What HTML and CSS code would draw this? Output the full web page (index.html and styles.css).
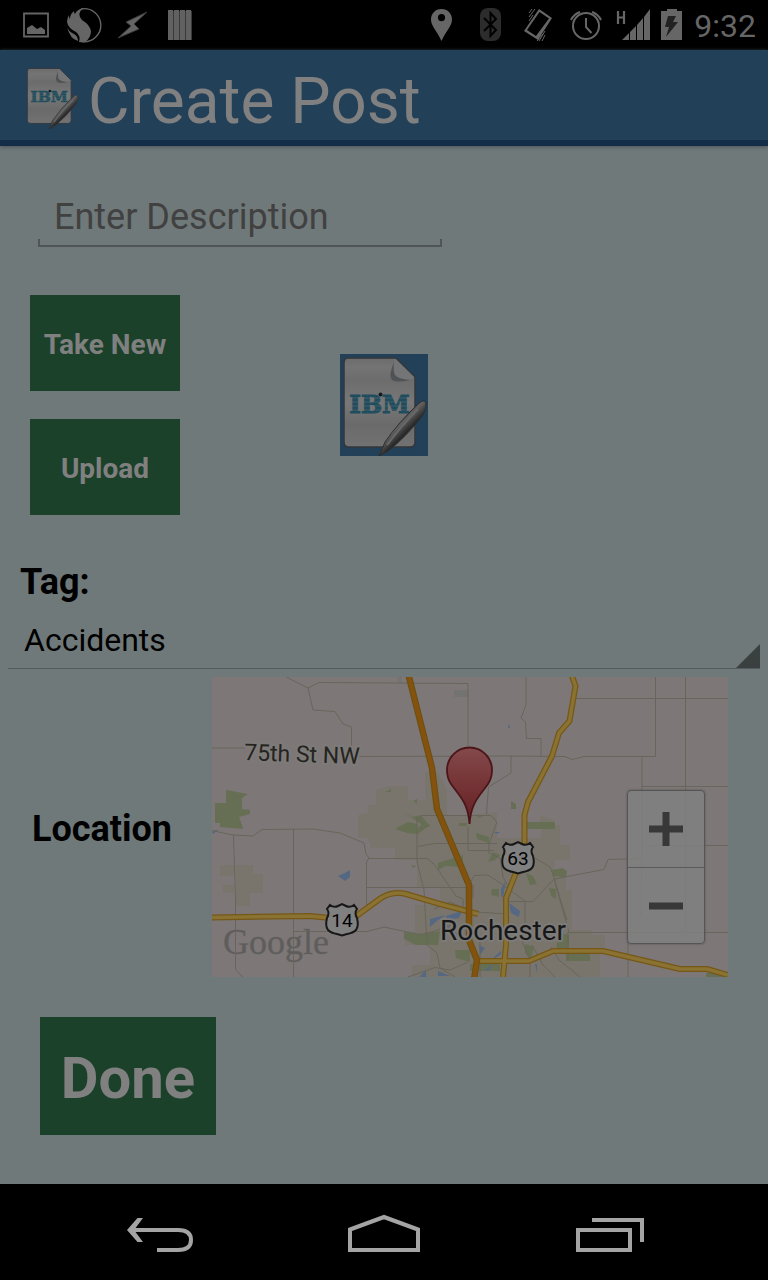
FILE: index.html
```html
<!DOCTYPE html>
<html lang="en">
<head>
<meta charset="utf-8">
<meta name="viewport" content="width=device-width, initial-scale=1">
<title>Create Post</title>
<link rel="stylesheet" href="styles.css">
</head>
<body>
<svg class="defs" aria-hidden="true">
  <defs>
    <linearGradient id="paper" x1="0" y1="0" x2="0" y2="1">
      <stop offset="0" stop-color="#6c6c6c"/><stop offset=".1" stop-color="#747474"/>
      <stop offset=".25" stop-color="#6c6c6c"/><stop offset=".5" stop-color="#787878"/>
      <stop offset=".75" stop-color="#6a6a6a"/><stop offset="1" stop-color="#727272"/>
    </linearGradient>
    <linearGradient id="pen" gradientUnits="userSpaceOnUse" x1="58" y1="66" x2="68" y2="76">
      <stop offset="0" stop-color="#3a3a3a"/><stop offset=".35" stop-color="#626262"/>
      <stop offset=".7" stop-color="#444"/><stop offset="1" stop-color="#2a2a2a"/>
    </linearGradient>
    <symbol id="doc" viewBox="0 0 88 102">
      <path d="M8 4H56L75 23V88Q75 93 70 93H9Q4 93 4 88V9Q4 4 8 4Z" fill="url(#paper)" stroke="#33373b" stroke-width="1.500"/>
      <path d="M55 5L74 23Q73 26 60 27Q51 27 52 16Z" fill="#747576"/>
      <path d="M54 8Q48 22 52 26Q57 29 70 26Q58 25 55 21Q53 17 54 8Z" fill="#505355"/>
      <text class="doc-mark" x="39.500" y="59" text-anchor="middle">IBM</text>
      <path d="M10 44H68M10 48H68M10 52H68M10 56H68" stroke="#6f7576" stroke-width="1" opacity=".45"/>
      <circle cx="40.500" cy="40.500" r="2" fill="#101c20"/>
      <path d="M39 102L45 88Q58 69 79 49Q84 45 86 49Q87 54 83 61Q66 83 48 97Z" fill="url(#pen)" stroke="#2e2e2e" stroke-width="1"/>
      <path d="M47 91Q62 71 78 55" fill="none" stroke="#686868" stroke-width="2"/>
    </symbol>
  </defs>
</svg>

<div class="status">
  <svg class="status-icon" viewBox="0 0 48 50"><path d="M12 13.500H36V36.500H12Z" fill="none" stroke="#656565" stroke-width="1.800"/><path d="M15 34V28L20 25L25 29L29 27L33 30V34Z" fill="#656565"/></svg>
  <svg class="status-icon" viewBox="0 0 48 50"><path d="M21 9A16.500 16.500 0 1 1 22 41.500" fill="none" stroke="#656565" stroke-width="1.400"/><path d="M24 8Q16 13 22 20Q30 25 31 31Q31 38 25 42Q22 42.500 19 42Q21 36 16 32Q8 28 7 22Q7 18 9 15Q9 18 10 19Q10 14 14 11Q14 14 15 14Q17 9 24 8ZM7 27Q9 32 14 34Q18 36 18 41Q10 39 7 27Z" fill="#656565"/></svg>
  <svg class="status-icon" viewBox="0 0 48 50"><path d="M39 12L18 22L23 26L10 38L31 29L26 24Z" fill="#656565" stroke="#3c3c3c" stroke-width="1"/></svg>
  <svg class="status-icon" viewBox="0 0 48 50"><path d="M12 10H17V40H12ZM18 10H23V40H18ZM24 10H29V40H24ZM30 10H35V40H30Z" fill="#616161"/><path d="M17.500 11V40M23.500 11V40M29.500 11V40M35.500 11V40" stroke="#393939"/></svg>
  <span class="spacer"></span>
  <svg class="status-icon" viewBox="0 0 48 50"><path fill-rule="evenodd" d="M23.500 9C17 9 13 14 13 19.500C13 26 19 31 23.500 41C28 31 34 26 34 19.500C34 14 30 9 23.500 9ZM23.500 14A3.600 3.600 0 1 1 23.500 21.200A3.600 3.600 0 1 1 23.500 14Z" fill="#666"/></svg>
  <svg class="status-icon" viewBox="0 0 48 50"><rect x="14" y="8" width="21" height="33" rx="8" fill="#2c2c2c"/><path d="M18 18L30 30L24.500 36V13L30 19L18 31" fill="none" stroke="#000" stroke-width="2"/></svg>
  <svg class="status-icon" viewBox="0 0 48 50"><path fill-rule="evenodd" d="M25 9L38 18L24 40L10 31ZM25.500 12L13 30L22 36L35 18.500Z" fill="#666"/><path d="M15 17L21 9M15 21L19 15M15 13L18 9M25 41L31 31M28 41L31 35M23 41L29 34" stroke="#666" stroke-width="1"/></svg>
  <svg class="status-icon" viewBox="0 0 48 50"><circle cx="24" cy="26" r="13" fill="none" stroke="#666" stroke-width="2"/><path d="M24 18V27L29.500 33M9 20Q12 14 18 12M39 20Q36 14 30 12" fill="none" stroke="#666" stroke-width="2"/></svg>
  <svg class="status-icon" viewBox="0 0 48 50"><path d="M8 11V24M14 11V24M8 17.500H14" stroke="#666" stroke-width="2.200" fill="none"/><path d="M12 40L19 33V40ZM20 32L26 26V40H20ZM27 25L33 18V40H27ZM34 17L40 9V40H34Z" fill="#666"/></svg>
  <svg class="status-icon battery" viewBox="0 0 28 50"><path d="M3 11H9V9H19V11H24V40H3Z" fill="#666"/><path d="M10 16H18L15 22H20L8 37L11 27H7Z" fill="#222"/></svg>
  <time class="clock">9:32</time>
</div>

<header class="bar">
  <svg class="bar-icon"><use href="#doc"/></svg>
  <h1 class="bar-title">Create Post</h1>
</header>

<main class="form">
  <input class="description" type="text" placeholder="Enter Description" aria-label="Description">
  <section class="photo">
    <div class="photo-actions">
      <button class="btn" type="button">Take New</button>
      <button class="btn" type="button">Upload</button>
    </div>
    <svg class="preview" role="img" aria-label="Post picture"><use href="#doc"/></svg>
  </section>
  <label class="tag-label" for="tag">Tag:</label>
  <select class="tag" id="tag"><option>Accidents</option></select>
  <section class="location">
    <h2 class="location-label">Location</h2>
    <div class="map">
      <svg class="map-canvas" viewBox="212 677 516 300" role="img" aria-label="Map of Rochester">
        <defs>
          <linearGradient id="pin" x1="0" y1="0" x2="0" y2="1"><stop offset="0" stop-color="#84494a"/><stop offset="1" stop-color="#641e22"/></linearGradient>
          <path id="shield" d="M-12 -15Q-8 -12 -4 -14L0 -16L4 -14Q8 -12 12 -15L15 -11Q12 -7 15 -2Q17 6 14 10Q11 13 5 14L0 15.500L-5 14Q-11 13 -14 10Q-17 6 -15 -2Q-12 -7 -15 -11Z"/>
        </defs>
        <rect x="212" y="677" width="516" height="300" fill="#7d7877"/>
        <g fill="#79756d">
          <path d="M358 825V815L368 813V805H376V790L390 786H408V800H425V772H438L447 790V815H470L497 812V838H541V825H560V845H570V860H555V875H566V890H572V930H592V945H600V977H412V965H430V945H405V932H415V905H440V887H417V860H395V848H370V838H358Z"/>
          <path d="M220 865H234V876H220ZM236 865H253V874H263V893H250V906H236ZM223 885H234V893H223ZM368 826H383V842H368ZM540 815L554 820V826H540ZM592 935H605V952H592Z"/>
        </g>
        <g fill="#666f54">
          <path d="M226 790L248 794L242 798V809L250 810V814L239 817L243 828H230V823H215V803H226ZM220 820H237L243 829L220 827Z"/>
          <path d="M397 828L408 822L417 824V829L424 821L430 825L418 834L407 833L395 829ZM401 811L412 817L421 815L430 827L425 827L414 819ZM385 792L391 789V792ZM413 801L417 799V804ZM438 863L463 855V867L446 866L438 870ZM404 932L417 934L440 931L438 945H416L404 939ZM526 822H555V829H526ZM511 801L516 804V809H511ZM476 833L489 837V843L477 839ZM552 870L562 868L567 871L566 877L553 876ZM526 873L533 876L537 884L530 885ZM549 888L556 889V899L551 896ZM492 889H499V897L491 895ZM558 934H569V951H590V961H566V952H556ZM525 944L534 947L531 959L525 953ZM410 865L416 866L414 868ZM455 950H470V962L456 958ZM470 964H500V971H470ZM493 852L500 855L495 860L488 862ZM459 823H467V826H459ZM706 973H728V977H706ZM477 816L484 815L480 818Z"/>
        </g>
        <g fill="#546783">
          <path d="M338 876L345 873L350 870L350 877L345 881ZM212 832L219 829L213 834ZM430 919L446 915L438 920L430 927ZM419 977L426 970V977ZM438 971L450 976H438ZM509 903L520 911L519 917L511 913ZM501 889L506 880L503 898L501 895ZM493 958L501 951V954L494 959ZM508 728L509 723L510 728ZM535 964H537V973ZM447 925L459 935L457 943ZM479 945L485 948L480 955ZM484 971L492 964L489 970ZM494 832H500L497 834ZM446 916L462 911L459 918L448 920Z"/>
        </g>
        <path d="M454 690H468V697H454ZM398 677H402V683H398Z" fill="#737372"/>
        <g fill="none" stroke="#68655b" stroke-width="1">
          <path d="M286 677L308 688L319 682.500L468 683.500V746M308 688L313 710L335 711.500L343 724L351.500 727V750M212 748H245M357 756.500L508 756L565 756.500L572 759.500L584 756.500H655.500V677M526 677V705L521 718L525.500 722L526.500 738.500H541V756M511 756V773L488.500 787L486.500 814M422 815.500H491L497 822L494 830L489 844V853L500 858M575 698.500H728M685.500 677V932.500M642 757V786.500H728M642 786V850L641 915L628 928V977"/>
          <path d="M645 845.500H728M641 858.500L608 859.500L604 869.500L554 879L533 901.500H508M554 879L569 932.500H728M535 858L550 867L554.500 879L559 895L567 920M468 887L474 875.500L488 875L500 883L525 901V930M212 830.500L233 835L253 836L262 829.500L313 829L340 833L364 843L366 854L369 858L366.500 862V905M233.500 835L235.500 900V970L243 977M293.500 829V977M369 858.500H427L434 864L456 896L463 899V912M366 887.500H466M417 817V862L424 890L427 945L437 953L440 968M293 931.500H367L384 927L422 935L452 925M417 846.500L435 843.500H497M468 827V850M468 850.500H494M408 977L435 967.500L450 970L468 962M440 968L455 977M422 815.500L417 822M434 909L450 902L466 909M473 898L473 885M500 858L503 877L510 890M477 912L505 914M480 938V977M532 945L543 965L555 977M551 947L559 960L580 977M515 925L530 960V977M568 932V960"/>
        </g>
        <g fill="none" stroke-linejoin="round">
          <path d="M571 673L575.500 686L569.500 721L559 733L552 756L528 802L524.500 815V847M517 870L506 898V945L503 977M212 917.500L310 916L335 918.500M355 917L381 898Q393 891 406 894L440 904L478 914M476 961H529L553 951H603L680 969H707L728 975" stroke="#765717" stroke-width="6"/>
          <path d="M571 673L575.500 686L569.500 721L559 733L552 756L528 802L524.500 815V847M517 870L506 898V945L503 977M212 917.500L310 916L335 918.500M355 917L381 898Q393 891 406 894L440 904L478 914M476 961H529L553 951H603L680 969H707L728 975" stroke="#8a7332" stroke-width="3.500"/>
          <path d="M408 673L432 768L437 809L469 885V940L477 960L474 980" stroke="#695012" stroke-width="6.500"/>
          <path d="M408 673L432 768L437 809L469 885V940L477 960L474 980" stroke="#85520d" stroke-width="4.500"/>
        </g>
        <g class="shield" transform="translate(342 920)"><use href="#shield"/><text y="7" text-anchor="middle">14</text></g>
        <g class="shield" transform="translate(518 858)"><use href="#shield"/><text y="7" text-anchor="middle">63</text></g>
        <text class="place" x="244" y="760" transform="rotate(2 244 760)">75th St NW</text>
        <text class="place city" x="440" y="940">Rochester</text>
        <text class="watermark" x="223" y="954">Google</text>
        <path d="M469.500 824C468 803 461 798 451 784C447 778 447 773 447 770A22.500 22.500 0 0 1 492 770C492 773 492 778 488 784C478 798 471 803 469.500 824Z" fill="url(#pin)" stroke="#4c1519" stroke-width="1.800"/>
      </svg>
      <div class="zoom">
        <button class="zoom-btn" type="button" aria-label="Zoom in"><svg viewBox="0 0 34 34"><path d="M17 0V34M0 17H34" stroke="#383838" stroke-width="7"/></svg></button>
        <button class="zoom-btn" type="button" aria-label="Zoom out"><svg viewBox="0 0 34 34"><path d="M0 17H34" stroke="#383838" stroke-width="7"/></svg></button>
      </div>
    </div>
  </section>
  <button class="btn done" type="button">Done</button>
</main>

<nav class="nav">
  <button class="nav-btn" type="button" aria-label="Back"><svg viewBox="0 0 72 40"><path d="M7 16H54C63 16 67 20 67 26S63 36 54 36H33" fill="none" stroke="#a4a4a4" stroke-width="4"/><path d="M3 16L13.500 4H19L10 16L19 28H13.500Z" fill="#a4a4a4"/></svg></button>
  <button class="nav-btn" type="button" aria-label="Home"><svg viewBox="0 0 72 40"><path d="M2 36V15.500L36 3L70 15.500V36Z" fill="none" stroke="#a4a4a4" stroke-width="4"/></svg></button>
  <button class="nav-btn" type="button" aria-label="Recent apps"><svg viewBox="0 0 72 40"><path d="M6 16H58V36H6ZM20 6H70V28" fill="none" stroke="#a4a4a4" stroke-width="4"/></svg></button>
</nav>
</body>
</html>
```

FILE: styles.css
```css
* { box-sizing: border-box; }
body {
  margin: 0;
  min-height: 100vh;
  display: flex;
  flex-direction: column;
  background: #70797a;
  font-family: Roboto, "Noto Sans", sans-serif;
  color: #000;
}
button, input, select { font: inherit; border: 0; border-radius: 0; }
.defs { position: absolute; width: 0; height: 0; }

.status { display: flex; align-items: center; height: 50px; padding: 0 12px; background: #000; }
.status-icon { width: 48px; height: 50px; flex: none; }
.battery { width: 28px; }
.spacer { flex: 1; }
.clock { margin-left: 8px; padding-top: 2px; font-size: 32px; line-height: 48px; color: #666; }

.bar {
  display: flex;
  align-items: center;
  gap: 8px;
  height: 96px;
  padding: 4px 0 0 24px;
  background: #234059;
  border-bottom: 6px solid #132d49;
  box-shadow: 0 1px 4px #4a5354;
}
.bar-icon { width: 56px; height: 63px; }
.bar-title { margin: 0; font-size: 64px; font-weight: 400; line-height: 76px; color: #808080; padding-top: 10px; }
.doc-mark { font-family: "DejaVu Serif", serif; font-weight: 700; font-size: 25px; fill: #204d5d; stroke: #204d5d; stroke-width: 1px; }

.form { flex: 1; display: flex; flex-direction: column; align-items: flex-start; }
.description {
  width: calc(100% - 76px);
  max-width: 404px;
  height: 64px;
  margin: 37px 38px 0;
  padding: 4px 16px 0;
  font-size: 36px;
  color: #000;
  outline: 0;
  background:
    linear-gradient(#505555, #505555) bottom / 100% 2px no-repeat,
    linear-gradient(#505555, #505555) left bottom / 2px 8px no-repeat,
    linear-gradient(#505555, #505555) right bottom / 2px 8px no-repeat;
}
.description::placeholder { color: #414141; opacity: 1; }

.photo { display: grid; grid-template-columns: 1fr auto 1fr; align-items: center; width: 100%; margin-top: 48px; padding: 0 30px; }
.photo-actions { display: flex; flex-direction: column; align-items: flex-start; gap: 28px; }
.btn { width: 150px; height: 96px; padding: 2px 0 0; background: #1c412b; color: #808080; font-size: 28px; font-weight: 700; }
.preview { width: 88px; height: 102px; background: #234059; }

.tag-label { margin: 45px 20px 0; font-size: 36px; line-height: 44px; font-weight: 700; }
.tag {
  appearance: none;
  width: calc(100% - 16px);
  height: 65px;
  margin: 0 8px;
  padding: 8px 32px 0 16px;
  font-size: 32px;
  color: #000;
  outline: 0;
  border-bottom: 1px solid #555b5c;
  background: linear-gradient(135deg, transparent 48%, #3a3f40 52%) right bottom / 24px 24px no-repeat;
}

.location { display: flex; align-items: center; width: 100%; margin-top: 8px; padding: 0 40px 0 32px; }
.location-label { width: 180px; flex: none; margin: 0; padding-top: 4px; font-size: 36px; font-weight: 700; }
.map { flex: 1; position: relative; }
.map-canvas { display: block; width: 100%; }
.place { font-size: 23px; fill: #252420; stroke: #7d7b79; stroke-width: 4px; paint-order: stroke; stroke-linejoin: round; }
.city { font-size: 28px; fill: #171717; }
.watermark { font-family: "Liberation Serif", serif; font-size: 36px; fill: #5f5d5c; stroke: #74706f; stroke-width: 1px; paint-order: stroke; }
.shield { fill: #808080; stroke: #171717; stroke-width: 2px; }
.shield text { fill: #000; stroke: none; font-size: 19px; }
.zoom {
  position: absolute;
  right: 23px;
  bottom: 33px;
  width: 78px;
  border: 1px solid #555;
  border-radius: 4px;
  background: rgba(128, 128, 128, .86);
  box-shadow: 0 0 2px #4c4c4c;
}
.zoom-btn { display: flex; align-items: center; justify-content: center; width: 100%; height: 76px; padding: 0; background: none; }
.zoom-btn + .zoom-btn { border-top: 1px solid #5a5a5a; }
.zoom-btn svg { width: 34px; height: 34px; }

.done { width: 176px; height: 118px; margin: 40px 40px 49px; padding-top: 4px; font-size: 58px; }

.nav { display: flex; height: 96px; padding: 0 48px; background: #000; }
.nav-btn { flex: 1; display: flex; align-items: center; justify-content: center; padding: 4px 0 0; background: none; }
.nav-btn svg { width: 72px; height: 40px; }
```
